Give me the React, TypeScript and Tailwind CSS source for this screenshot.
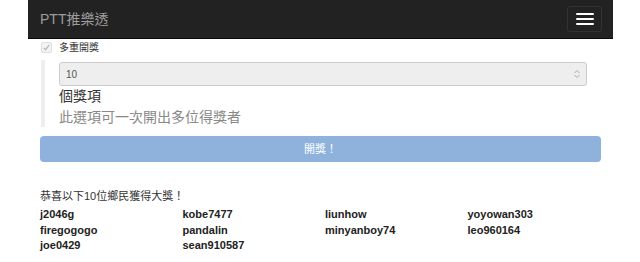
import React from "react";

const winners = [
  "j2046g", "kobe7477", "liunhow", "yoyowan303",
  "firegogogo", "pandalin", "minyanboy74", "leo960164",
  "joe0429", "sean910587",
];

export default function App() {
  return (
    <div
      className="w-[640px] h-[262px] bg-white overflow-hidden"
      style={{ fontFamily: '"Liberation Sans", "Noto Sans CJK TC", sans-serif' }}
    >
      <div className="ml-[28px] w-[585px] h-[39px] bg-[#222222] border-b border-[#080808] flex items-center justify-between pl-[12px] pr-[11px]">
        <span className="text-[14px] text-[#9d9d9d] leading-none">PTT推樂透</span>
        <div className="w-[35px] h-[26px] border border-[#333333] rounded-[3px] flex flex-col items-center justify-center gap-[3px]">
          <div className="w-[18px] h-[2px] bg-white rounded-[1px]" />
          <div className="w-[18px] h-[2px] bg-white rounded-[1px]" />
          <div className="w-[18px] h-[2px] bg-white rounded-[1px]" />
        </div>
      </div>

      <div className="pl-[40px] pr-[39px]">
        <div className="flex items-center h-[16px] ml-[1px]">
          <div className="w-[11px] h-[11px] rounded-[2px] border border-[#dddddd] bg-[#f3f3f3] flex items-center justify-center">
            <svg width="9" height="9" viewBox="0 0 10 10">
              <path d="M2 5.5 L4 7.5 L8 2" stroke="#b5b5b5" strokeWidth="1.3" fill="none" />
            </svg>
          </div>
          <span className="ml-[7px] text-[10px] text-[#333333]">多重開獎</span>
        </div>

        <div className="mt-[5px] ml-[1px] border-l-[4px] border-[#eeeeee] pl-[14px] pt-[2px] pb-[1px] w-[546px]">
          <div className="h-[24px] bg-[#eeeeee] border border-[#cccccc] rounded-[3px] flex items-center justify-between pl-[6px] pr-[5px]">
            <span className="text-[10px] text-[#555555]">10</span>
            <svg width="8" height="10" viewBox="0 0 8 10">
              <path d="M1.5 4 L4 1.5 L6.5 4 M1.5 6 L4 8.5 L6.5 6" stroke="#aaaaaa" strokeWidth="1" fill="none" />
            </svg>
          </div>
          <div className="text-[14px] text-[#333333] leading-[20px]">個獎項</div>
          <div className="text-[14px] text-[#888888] leading-[18px] mt-[2px]">此選項可一次開出多位得獎者</div>
        </div>

        <div className="mt-[9px] h-[26px] w-[561px] bg-[#8eb2dc] rounded-[4px] flex items-center justify-center">
          <span className="text-[11px] text-white">開獎！</span>
        </div>

        <div className="mt-[26px] text-[11px] text-[#333333] leading-[16px]">恭喜以下10位鄉民獲得大獎！</div>
        <div className="mt-[3px] grid grid-cols-4 w-[570px]">
          {winners.map((w) => (
            <div key={w} className="text-[11px] font-bold text-[#222222] leading-[15.5px]">
              {w}
            </div>
          ))}
        </div>
      </div>
    </div>
  );
}
